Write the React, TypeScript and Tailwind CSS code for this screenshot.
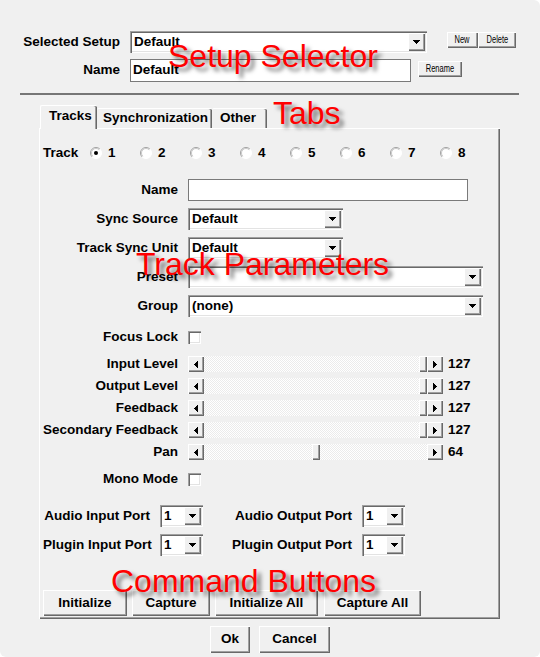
import React from "react";

const font = "font-['Liberation_Sans',Arial,sans-serif]";
const raised =
  "bg-[#f0f0f0] shadow-[inset_1px_1px_0_#ffffff,inset_-1px_-1px_0_#696969,inset_-2px_-2px_0_#a0a0a0]";
const sunken =
  "shadow-[inset_1px_1px_0_#a0a0a0,inset_2px_2px_0_#696969,inset_-1px_-1px_0_#ffffff,inset_-2px_-2px_0_#e3e3e3]";
const overlay =
  "absolute whitespace-nowrap text-[32px] leading-none text-[#ff0000] font-['Liberation_Sans',Arial,sans-serif] [text-shadow:4px_4px_4px_rgba(0,0,0,0.55)]";

const DownArrow = () => (
  <svg width="7" height="4" viewBox="0 0 7 4" shapeRendering="crispEdges">
    <polygon points="0,0 7,0 3.5,4" fill="#000" />
  </svg>
);

const SideArrow = ({ dir }: { dir: "left" | "right" }) => (
  <svg width="4" height="7" viewBox="0 0 4 7" shapeRendering="crispEdges">
    <polygon points={dir === "left" ? "4,0 4,7 0,3.5" : "0,0 0,7 4,3.5"} fill="#000" />
  </svg>
);

const Combo = ({ value, className }: { value?: string; className: string }) => (
  <div className={`flex h-[22px] items-center bg-white ${sunken} ${className}`}>
    <span className="flex-1 truncate pl-[4px] text-[13.5px] font-bold">{value}</span>
    <div className={`mr-[2px] flex h-[18px] w-[17px] items-center justify-center ${raised}`}>
      <DownArrow />
    </div>
  </div>
);

const SmallButton = ({ children, className }: { children: React.ReactNode; className: string }) => (
  <div className={`flex h-[16px] items-center justify-center ${raised} ${className}`}>
    <span className="inline-block scale-x-[0.75] text-[10px] leading-none">{children}</span>
  </div>
);

const Button = ({ children, className }: { children: React.ReactNode; className: string }) => (
  <div className={`flex items-center justify-center text-[13.5px] font-bold ${raised} ${className}`}>
    {children}
  </div>
);

const Checkbox = () => <div className={`h-[13px] w-[13px] bg-white ${sunken}`} />;

const Radio = ({ checked }: { checked?: boolean }) => (
  <svg width="12" height="12" viewBox="0 0 12 12">
    <circle cx="6" cy="6" r="5.5" fill="#fff" />
    <path d="M2.1 9.9 A5.5 5.5 0 0 1 9.9 2.1" fill="none" stroke="#a0a0a0" strokeWidth="1" />
    <path d="M2.8 9.2 A4.5 4.5 0 0 1 9.2 2.8" fill="none" stroke="#c8c8c8" strokeWidth="1" />
    <path d="M9.9 2.1 A5.5 5.5 0 0 1 2.1 9.9" fill="none" stroke="#ffffff" strokeWidth="1" />
    {checked && <circle cx="6" cy="6" r="2" fill="#000" />}
  </svg>
);

const Slider = ({ value }: { value: number }) => {
  const left = Math.round((value / 127) * (223 - 8));
  return (
    <div className="flex h-4 items-center">
      <div className={`flex h-4 w-4 items-center justify-center ${raised}`}>
        <SideArrow dir="left" />
      </div>
      <div className="relative h-4 w-[223px] bg-[image:repeating-conic-gradient(#ffffff_0%_25%,#ebebeb_0%_50%)] bg-[length:2px_2px]">
        <div className={`absolute top-0 h-4 w-2 ${raised}`} style={{ left }} />
      </div>
      <div className={`flex h-4 w-4 items-center justify-center ${raised}`}>
        <SideArrow dir="right" />
      </div>
      <span className="ml-[5px] text-[13.5px] font-bold">{value}</span>
    </div>
  );
};

const Label = ({ children }: { children: React.ReactNode }) => (
  <div className="w-[135px] shrink-0 whitespace-nowrap pr-0 text-right text-[13.5px] font-bold">{children}</div>
);

const sliders = [
  { name: "Input Level", value: 127 },
  { name: "Output Level", value: 127 },
  { name: "Feedback", value: 127 },
  { name: "Secondary Feedback", value: 127 },
  { name: "Pan", value: 64 },
];

export default function App() {
  return (
    <div className={`relative h-[657px] w-[540px] overflow-hidden bg-white text-black ${font}`}>
      <div className="flex h-full flex-col rounded-tr-[6px] rounded-b-[6px] bg-[#f0f0f0] pt-[31px]">
        {/* setup selector */}
        <div className="flex items-start">
          <div className="flex h-[22px] w-[120px] items-center justify-end whitespace-nowrap text-[13.5px] font-bold">
            Selected Setup
          </div>
          <Combo className="ml-[10px] w-[297px]" value="Default" />
          <div className="ml-[20px] mt-[1px] flex">
            <SmallButton className="w-[31px]">New</SmallButton>
            <SmallButton className="w-[38px]">Delete</SmallButton>
          </div>
        </div>
        <div className="mt-[6px] flex items-start">
          <div className="flex h-[23px] w-[120px] items-center justify-end text-[13.5px] font-bold">Name</div>
          <div className="ml-[10px] flex h-[23px] w-[281px] items-center border border-[#7a7a7a] bg-white pl-[2px] text-[13.5px] font-bold">
            Default
          </div>
          <SmallButton className="ml-[7px] mt-[2px] w-[44px]">Rename</SmallButton>
        </div>

        <div className="ml-[20px] mt-[11px] h-[2px] w-[499px] bg-[#767676]" />

        {/* tabs */}
        <div className="ml-[40px] mt-[10px] flex h-[23px] items-end text-[13.5px] font-bold">
          <div className="relative z-10 mb-[-1px] flex h-[24px] w-[57px] items-center rounded-t-[2px] border-l border-t border-white bg-[#f0f0f0] pb-[3px] pl-[8px] shadow-[inset_-1px_0_0_#696969,inset_-2px_0_0_#a0a0a0]">
            Tracks
          </div>
          <div className="flex h-[20px] w-[115px] items-center rounded-t-[2px] border-t border-white pl-[6px] shadow-[inset_-1px_0_0_#696969,inset_-2px_0_0_#a0a0a0]">
            Synchronization
          </div>
          <div className="flex h-[20px] w-[55px] items-center rounded-t-[2px] border-t border-white pl-[8px] shadow-[inset_-1px_0_0_#696969,inset_-2px_0_0_#a0a0a0]">
            Other
          </div>
        </div>

        {/* panel */}
        <div className="ml-[39px] flex h-[491px] w-[461px] flex-col border-l border-t border-white pl-[3px] shadow-[inset_-1px_-1px_0_#696969,inset_-2px_-2px_0_#a0a0a0]">
          <div className="mt-[16px] flex h-4 items-center text-[13.5px] font-bold">
            <div className="w-[47px]">Track</div>
            {[1, 2, 3, 4, 5, 6, 7, 8].map((n) => (
              <div key={n} className="flex w-[50px] items-center">
                <Radio checked={n === 1} />
                <span className="ml-[6px]">{n}</span>
              </div>
            ))}
          </div>

          <div className="mt-[18px] flex h-[22px] items-center gap-[10px]">
            <Label>Name</Label>
            <div className="h-[22px] w-[280px] border border-[#7a7a7a] bg-white" />
          </div>
          <div className="mt-[7px] flex items-center gap-[10px]">
            <Label>Sync Source</Label>
            <Combo className="w-[155px]" value="Default" />
          </div>
          <div className="mt-[7px] flex items-center gap-[10px]">
            <Label>Track Sync Unit</Label>
            <Combo className="w-[155px]" value="Default" />
          </div>
          <div className="mt-[7px] flex items-center gap-[10px]">
            <Label>Preset</Label>
            <Combo className="w-[295px]" />
          </div>
          <div className="mt-[7px] flex items-center gap-[10px]">
            <Label>Group</Label>
            <Combo className="w-[295px]" value="(none)" />
          </div>

          <div className="mt-[12px] flex h-4 items-center gap-[10px]">
            <Label>Focus Lock</Label>
            <Checkbox />
          </div>

          <div className="mt-[11px] flex flex-col gap-[6px]">
            {sliders.map((s) => (
              <div key={s.name} className="flex h-4 items-center gap-[10px]">
                <Label>{s.name}</Label>
                <Slider value={s.value} />
              </div>
            ))}
          </div>

          <div className="mt-[11px] flex h-4 items-center gap-[10px]">
            <Label>Mono Mode</Label>
            <Checkbox />
          </div>

          <div className="mt-[18px] flex h-[22px] items-center text-[13.5px] font-bold">
            <div className="w-[107px] whitespace-nowrap text-right">Audio Input Port</div>
            <Combo className="ml-[10px] w-[43px]" value="1" />
            <div className="w-[149px] whitespace-nowrap text-right">Audio Output Port</div>
            <Combo className="ml-[10px] w-[43px]" value="1" />
          </div>
          <div className="mt-[7px] flex h-[22px] items-center text-[13.5px] font-bold">
            <div className="w-[107px] whitespace-nowrap text-right">Plugin Input Port</div>
            <Combo className="ml-[10px] w-[43px]" value="1" />
            <div className="w-[149px] whitespace-nowrap text-right">Plugin Output Port</div>
            <Combo className="ml-[10px] w-[43px]" value="1" />
          </div>

          <div className="mt-[34px] flex">
            <Button className="h-[26px] w-[84px]">Initialize</Button>
            <Button className="ml-[5px] h-[26px] w-[78px]">Capture</Button>
            <Button className="ml-[5px] h-[26px] w-[103px]">Initialize All</Button>
            <Button className="ml-[6px] h-[26px] w-[97px]">Capture All</Button>
          </div>
        </div>

        <div className="mt-[7px] flex justify-center gap-[9px]">
          <Button className="h-[27px] w-[40px]">Ok</Button>
          <Button className="h-[27px] w-[71px]">Cancel</Button>
        </div>
      </div>

      {/* annotation labels */}
      <div className={`${overlay} left-[168px] top-[40px]`}>Setup Selector</div>
      <div className={`${overlay} left-[273px] top-[97px]`}>Tabs</div>
      <div className={`${overlay} left-[136px] top-[248px]`}>Track Parameters</div>
      <div className={`${overlay} left-[111px] top-[565px]`}>Command Buttons</div>
    </div>
  );
}
